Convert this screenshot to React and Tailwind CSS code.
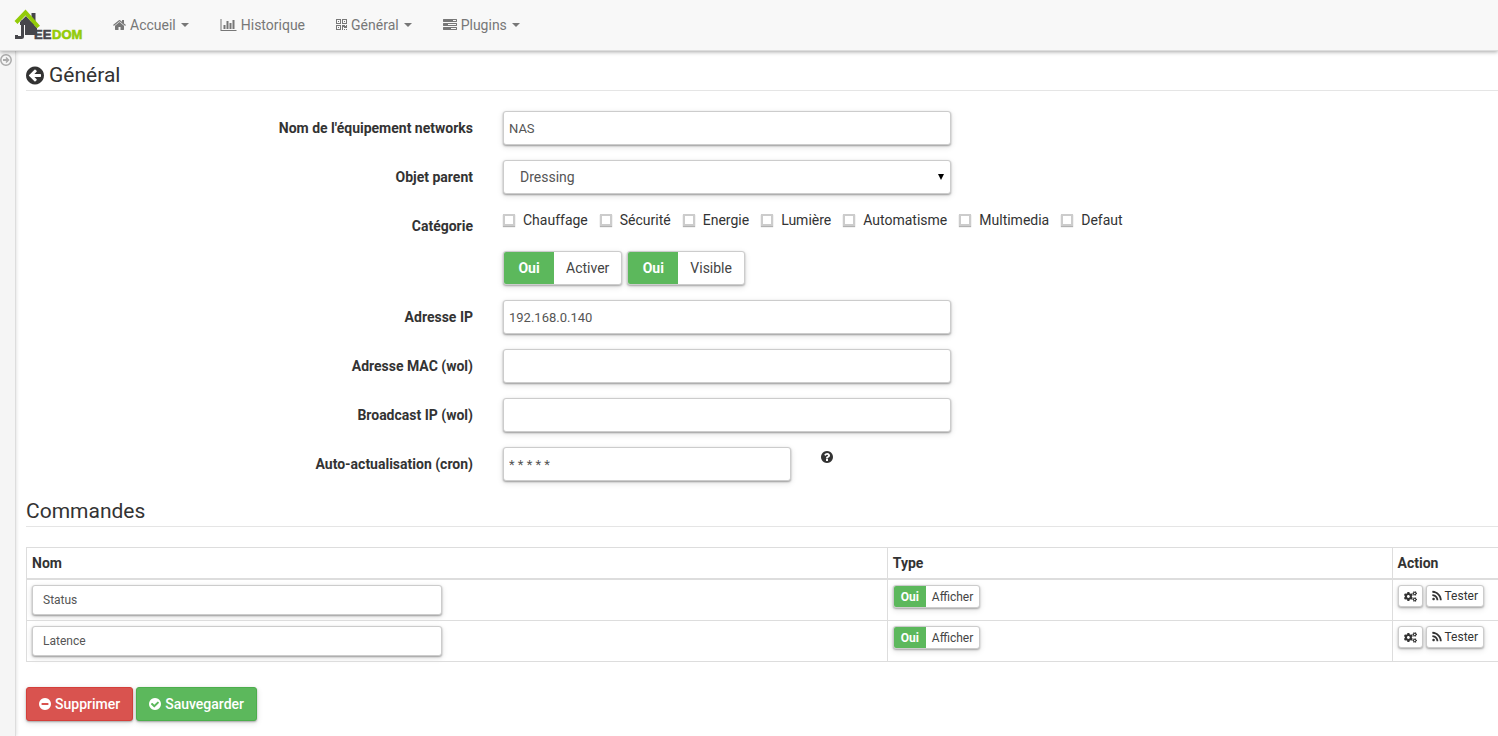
import { useState } from 'react';
import { FaCogs } from 'react-icons/fa';

const DISC = 'q0 209-103 385.5t-279.5 279.5-385.5 103-385.5-103-279.5-279.5-103-385.5 103-385.5 279.5-279.5 385.5-103 385.5 103 279.5 279.5 103 385.5z';

const icons = {
  home: {
    box: '64 0 1664 1792',
    d: 'M1472 992v480q0 26-19 45t-45 19h-384v-384h-256v384h-384q-26 0-45-19t-19-45v-480q0-1 .5-3t.5-3l575-474 575 474q1 2 1 6zm223-69l-62 74q-8 9-21 11h-3q-13 0-21-7l-692-577-692 577q-12 8-24 7-13-2-21-11l-62-74q-8-10-7-23.5t11-21.5l719-599q32-26 76-26t76 26l244 204v-195q0-14 9-23t23-9h192q14 0 23 9t9 23v408l219 182q10 8 11 21.5t-7 23.5z',
  },
  chart: {
    box: '0 0 2048 1792',
    d: 'M640 896v512h-256v-512h256zm384-512v1024h-256v-1024h256zm1024 1152v128h-2048v-1536h128v1408h1920zm-640-896v768h-256v-768h256zm384-384v1152h-256v-1152h256z',
  },
  qrcode: {
    box: '0 0 1408 1792',
    d: 'M384 1152v128h-128v-128h128zm0-768v128h-128v-128h128zm768 0v128h-128v-128h128zm-1024 1023h384v-383h-384v383zm0-767h384v-384h-384v384zm768 0h384v-384h-384v384zm-256 256v640h-640v-640h640zm512 512v128h-128v-128h128zm256 0v128h-128v-128h128zm0-512v384h-384v-128h-128v384h-128v-640h384v128h128v-128h128zm-768-768v640h-640v-640h640zm768 0v640h-640v-640h640z',
  },
  tasks: {
    box: '0 0 1792 1792',
    d: 'M1024 1408h640v-128h-640v128zm-384-512h1024v-128h-1024v128zm640-512h384v-128h-384v128zm512 832v256q0 26-19 45t-45 19h-1664q-26 0-45-19t-19-45v-256q0-26 19-45t45-19h1664q26 0 45 19t19 45zm0-512v256q0 26-19 45t-45 19h-1664q-26 0-45-19t-19-45v-256q0-26 19-45t45-19h1664q26 0 45 19t19 45zm0-512v256q0 26-19 45t-45 19h-1664q-26 0-45-19t-19-45v-256q0-26 19-45t45-19h1664q26 0 45 19t19 45z',
  },
  back: {
    box: '128 0 1536 1792',
    d: 'M1408 960v-128q0-26-19-45t-45-19h-502l189-189q19-19 19-45t-19-45l-91-91q-18-18-45-18t-45 18l-362 362-91 91q-18 18-18 45t18 45l91 91 362 362q18 18 45 18t45-18l91-91q18-18 18-45t-18-45l-189-189h502q26 0 45-19t19-45zm256-64' + DISC,
  },
  minus: {
    box: '128 0 1536 1792',
    d: 'M1344 960v-128q0-26-19-45t-45-19h-768q-26 0-45 19t-19 45v128q0 26 19 45t45 19h768q26 0 45-19t19-45zm320-64' + DISC,
  },
  check: {
    box: '128 0 1536 1792',
    d: 'M1412 734q0-28-18-46l-91-90q-19-19-45-19t-45 19l-408 407-226-226q-19-19-45-19t-45 19l-91 90q-18 18-18 46 0 27 18 45l362 362q19 19 45 19 27 0 46-19l543-543q18-18 18-45zm252 162' + DISC,
  },
  question: {
    box: '128 0 1536 1792',
    d: 'M1024 1376v-192q0-14-9-23t-23-9h-192q-14 0-23 9t-9 23v192q0 14 9 23t23 9h192q14 0 23-9t9-23zm256-672q0-88-55.5-163t-138.5-116-170-41q-243 0-371 213-15 24 8 42l132 100q7 6 19 6 16 0 25-12 53-68 86-92 34-24 86-24 48 0 85.5 26t37.5 59q0 38-20 61t-68 45q-63 28-115.5 86.5t-52.5 125.5v36q0 14 9 23t23 9h192q14 0 23-9t9-23q0-19 21.5-49.5t54.5-49.5q32-18 49-28.5t46-35 44.5-48 28-60.5 12.5-81zm384 192' + DISC,
  },
  rss: {
    box: '192 0 1408 1792',
    d: 'M576 1344q0 80-56 136t-136 56-136-56-56-136 56-136 136-56 136 56 56 136zm512 123q2 28-17 48-18 21-47 21h-135q-25 0-43-16.5t-20-41.5q-22-229-184.5-391.5t-391.5-184.5q-25-2-41.5-20t-16.5-43v-135q0-29 21-47 17-17 43-17h5q160 13 306 80.5t259 181.5q114 113 181.5 259t80.5 306zm512 2q2 27-18 47-18 20-46 20h-143q-26 0-44.5-17.5t-19.5-42.5q-12-215-101-408.5t-231.5-336-336-231.5-408.5-102q-25-1-42.5-19.5t-17.5-43.5v-143q0-28 20-46 18-18 44-18h3q262 13 501.5 120t425.5 294q187 186 294 425.5t120 501.5z',
  },
};

function Icon({ name, className }) {
  return (
    <svg viewBox={icons[name].box} fill="currentColor" aria-hidden="true" className={`shrink-0 ${className}`}>
      <path d={icons[name].d} />
    </svg>
  );
}

function Logo() {
  return (
    <svg viewBox="0 0 70 32" role="img" aria-label="Jeedom" className="h-8 w-[70px]">
      <path d="M17.500 4h4v12h-4z" fill="#46464b" />
      <path d="M6 13l6-6 11 12v7H6z" fill="#46464b" />
      <path d="M8.500 16v11.500q0 1-1 1H2.500v-2.500" fill="none" stroke="#f8f8f8" strokeWidth="5" />
      <path d="M8.500 16v11.500q0 1-1 1H2.500v-2.500M8.500 11.500v2.500" fill="none" stroke="#46464b" strokeWidth="3" />
      <path d="M2 13.500L11.500 3.500l13 14.500" fill="none" stroke="#93cb08" strokeWidth="4" />
      <g fontSize="13" fontWeight="700" fontFamily="Liberation Sans, sans-serif" strokeWidth="0.600">
        <text x="20" y="30" fill="#46464b" stroke="#46464b">EE</text>
        <text x="38" y="30" fill="#93cb08" stroke="#93cb08">DOM</text>
      </g>
    </svg>
  );
}

const navItems = [
  { label: 'Accueil', icon: 'home', size: 'w-[13px] h-[14px] mr-1', menu: true },
  { label: 'Historique', icon: 'chart', size: 'w-[17px] h-[14px] mr-1', menu: false },
  { label: 'Général', icon: 'qrcode', size: 'w-[11px] h-[14px] mr-1', menu: true },
  { label: 'Plugins', icon: 'tasks', size: 'w-[14px] h-[14px] mr-1', menu: true },
];

const categories = ['Chauffage', 'Sécurité', 'Energie', 'Lumière', 'Automatisme', 'Multimedia', 'Defaut'];

const field = 'block w-full h-[34px] rounded-[3px] border border-[#ccc] bg-white px-[5px] text-[13px] text-[#555] shadow-[0_1px_2px_rgba(0,0,0,0.35),0_2px_6px_rgba(0,0,0,0.12)] outline-none';
const smallBtn = 'flex h-[22px] items-center gap-[3px] rounded-[3px] border border-[#ccc] bg-white px-[5px] text-xs text-[#333] shadow-[0_1px_2px_rgba(0,0,0,0.3),0_2px_6px_rgba(0,0,0,0.12)]';
const bigBtn = 'flex h-[34px] items-center gap-1 rounded-[3px] border px-3 text-sm font-medium text-white shadow-[0_1px_2px_rgba(0,0,0,0.3),0_2px_6px_rgba(0,0,0,0.12)]';

function FormRow({ label, id, narrow, children, extra }) {
  return (
    <div className="mb-[15px] grid grid-cols-[462fr_318fr_160fr_532fr]">
      {label ? (
        <label htmlFor={id} className="pt-[7px] pr-[15px] text-right font-bold leading-5">{label}</label>
      ) : (
        <span />
      )}
      <div className={`px-[15px] ${narrow ? '' : 'col-span-2'}`}>{children}</div>
      {extra}
    </div>
  );
}

function Toggle({ label, small }) {
  const [on, setOn] = useState(true);

  return (
    <label className={`flex cursor-pointer overflow-hidden rounded-[3px] border border-[#ccc] bg-white shadow-[0_1px_2px_rgba(0,0,0,0.3),0_2px_6px_rgba(0,0,0,0.12)] ${small ? 'h-[23px] text-xs' : 'h-[34px] text-sm'}`}>
      <input type="checkbox" className="sr-only" checked={on} onChange={e => setOn(e.target.checked)} />
      <span className={`flex items-center justify-center bg-[#5cb85c] font-bold text-white ${small ? 'w-8' : 'w-[50px]'}`}>
        {on ? 'Oui' : 'Non'}
      </span>
      <span className={`flex items-center text-[#444] ${small ? 'px-[6px]' : 'px-3'}`}>{label}</span>
    </label>
  );
}

export default function App() {
  return (
    <div className="flex min-h-screen flex-col bg-white font-[Roboto,sans-serif] text-sm text-[#333]">
      <header className="relative z-10 flex h-[51px] items-center border-b border-[#ddd] bg-[#f8f8f8] pl-[14px] shadow-[0_1px_4px_rgba(0,0,0,0.35)]">
        <a href="#accueil" className="mr-[14px]"><Logo /></a>
        <nav className="flex gap-px">
          {navItems.map(item => (
            <a key={item.label} href={`#${item.icon}`} className="flex items-center px-[15px] leading-5 text-[#777]">
              <Icon name={item.icon} className={item.size} />
              {item.label}
              {item.menu && <span className="ml-[5px] border-x-4 border-t-4 border-x-transparent border-t-[#777]" />}
            </a>
          ))}
        </nav>
      </header>

      <div className="flex grow">
        <aside className="w-4 shrink-0 border-r border-[#ddd] bg-[#f5f5f5] pt-[3px] shadow-[1px_0_3px_rgba(0,0,0,0.1)]">
          <button type="button" aria-label="Ouvrir le menu" className="block text-[#aaa]">
            <svg viewBox="0 0 12 12" className="size-3" fill="none" stroke="currentColor" strokeWidth="1.5">
              <circle cx="6" cy="6" r="5.200" />
              <path d="M3 6h5" strokeWidth="2" />
              <path d="M6 3.500L8.500 6 6 8.500" />
            </svg>
          </button>
        </aside>

        <main className="min-w-0 grow pt-[9px] pl-[10px]">
          <h1 className="mb-5 flex items-center gap-[5px] border-b border-[#e5e5e5] text-[21px] leading-[30px]">
            <Icon name="back" className="h-[21px] w-[18px]" />
            Général
          </h1>

          <form onSubmit={e => e.preventDefault()}>
            <FormRow label="Nom de l'équipement networks" id="name">
              <input id="name" type="text" defaultValue="NAS" className={field} />
            </FormRow>
            <FormRow label="Objet parent" id="parent">
              <div className="relative">
                <select id="parent" defaultValue="Dressing" className="block h-[34px] w-full appearance-none rounded-[3px] border border-[#ccc] bg-white px-4 text-sm text-[#555] shadow-[0_1px_2px_rgba(0,0,0,0.35),0_2px_6px_rgba(0,0,0,0.12)] outline-none">
                  <option>Dressing</option>
                </select>
                <span className="pointer-events-none absolute top-[14px] right-[7px] border-x-[3px] border-t-[6px] border-x-transparent border-t-black" />
              </div>
            </FormRow>

            <div className="mb-[15px] grid grid-cols-[462fr_1010fr]">
              <span className="pt-[7px] pr-[15px] text-right font-bold leading-5">Catégorie</span>
              <div className="flex items-start gap-3 px-[15px]">
                {categories.map(c => (
                  <label key={c} className="flex items-center gap-2 leading-[22px]">
                    <input type="checkbox" className="size-3 appearance-none border-2 border-[#ccc] bg-white shadow-[0_1px_1px_rgba(0,0,0,0.3)] checked:bg-[#5cb85c]" />
                    {c}
                  </label>
                ))}
              </div>
            </div>

            <FormRow>
              <div className="flex gap-[5px]">
                <Toggle label="Activer" />
                <Toggle label="Visible" />
              </div>
            </FormRow>
            <FormRow label="Adresse IP" id="ip">
              <input id="ip" type="text" defaultValue="192.168.0.140" className={field} />
            </FormRow>
            <FormRow label="Adresse MAC (wol)" id="mac">
              <input id="mac" type="text" className={field} />
            </FormRow>
            <FormRow label="Broadcast IP (wol)" id="broadcast">
              <input id="broadcast" type="text" className={field} />
            </FormRow>
            <FormRow
              label="Auto-actualisation (cron)"
              id="cron"
              narrow
              extra={<div className="pt-[3px] pl-[15px]"><Icon name="question" className="h-[14px] w-3" /></div>}
            >
              <input id="cron" type="text" defaultValue="* * * * *" className={field} />
            </FormRow>
          </form>

          <h2 className="mb-5 border-b border-[#e5e5e5] text-[21px] leading-[30px]">Commandes</h2>

          <table className="mb-[25px] w-full table-fixed border-collapse border-y border-l border-[#ddd]">
            <colgroup>
              <col className="w-[58.5%]" />
              <col className="w-[34.3%]" />
              <col />
            </colgroup>
            <thead>
              <tr className="border-b-2 border-[#ddd] text-left leading-5">
                <th className="p-[5px]">Nom</th>
                <th className="border-l border-[#ddd] p-[5px]">Type</th>
                <th className="border-l border-[#ddd] p-[5px]">Action</th>
              </tr>
            </thead>
            <tbody>
              {['Status', 'Latence'].map(name => (
                <tr key={name} className="border-b border-[#ddd] align-top">
                  <td className="p-[5px]">
                    <input
                      type="text"
                      aria-label="Nom"
                      defaultValue={name}
                      className="block h-[30px] w-[410px] max-w-full rounded-[3px] border border-[#ccc] bg-white px-[10px] text-xs text-[#555] shadow-[0_1px_2px_rgba(0,0,0,0.35),0_2px_6px_rgba(0,0,0,0.12)] outline-none"
                    />
                  </td>
                  <td className="border-l border-[#ddd] p-[5px]">
                    <div className="flex"><Toggle label="Afficher" small /></div>
                  </td>
                  <td className="border-l border-[#ddd] p-[5px]">
                    <div className="flex gap-[3px]">
                      <button type="button" aria-label="Configurer" className={smallBtn}><FaCogs className="size-[13px]" /></button>
                      <button type="button" className={smallBtn}>
                        <Icon name="rss" className="h-3 w-[10px]" />
                        Tester
                      </button>
                    </div>
                  </td>
                </tr>
              ))}
            </tbody>
          </table>

          <div className="flex gap-[3px] pb-[14px]">
            <button type="button" className={`${bigBtn} border-[#d43f3a] bg-[#d9534f]`}>
              <Icon name="minus" className="h-[14px] w-3" />
              Supprimer
            </button>
            <button type="button" className={`${bigBtn} border-[#4cae4c] bg-[#5cb85c]`}>
              <Icon name="check" className="h-[14px] w-3" />
              Sauvegarder
            </button>
          </div>
        </main>
      </div>
    </div>
  );
}
